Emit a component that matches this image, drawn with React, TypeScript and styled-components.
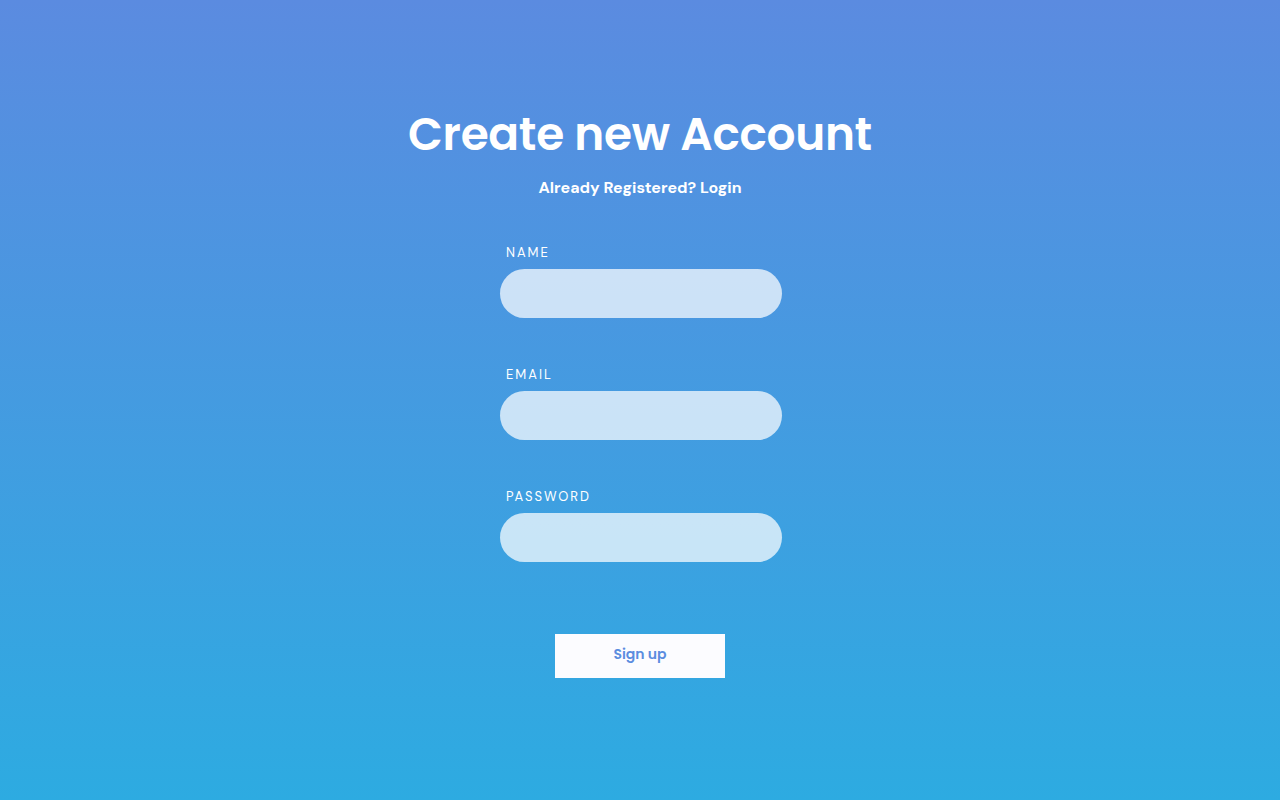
import React from "react";
import styled, { createGlobalStyle } from "styled-components";

const Global = createGlobalStyle`
  html, body { margin: 0; padding: 0; }
  body { font-family: "DM Sans", "Inter", "Liberation Sans", sans-serif; }
`;

const Page = styled.div`
  min-height: 800px;
  background: linear-gradient(180deg, #5b8be0 0%, #2dabe1 100%);
  display: flex;
  flex-direction: column;
  align-items: center;
  padding-top: 104px;
  box-sizing: border-box;
`;

const Title = styled.h1`
  margin: 0;
  font-family: "Poppins", "Inter", sans-serif;
  font-weight: 600;
  font-size: 45.4px;
  line-height: 60px;
  color: #ffffff;
  letter-spacing: -0.3px;
`;

const Sub = styled.p`
  margin: 14px 0 0;
  font-family: "DM Sans", "Inter", sans-serif;
  font-weight: 700;
  font-size: 16px;
  line-height: 20px;
  color: #ffffff;
`;

const Form = styled.form`
  margin-top: 46px;
  display: flex;
  flex-direction: column;
  width: 282px;
  margin-left: 2px;
`;

const Field = styled.div`
  display: flex;
  flex-direction: column;
  margin-bottom: 48px;
`;

const Label = styled.label`
  font-family: "DM Sans", "Inter", sans-serif;
  font-size: 13px;
  line-height: 16px;
  letter-spacing: 2px;
  color: #ffffff;
  padding: 1px 0 0 6px;
  margin-bottom: 8px;
`;

const Input = styled.input`
  height: 49px;
  border: none;
  outline: none;
  border-radius: 25px;
  background: rgba(255, 255, 255, 0.72);
  padding: 0 20px;
  box-sizing: border-box;
  font-size: 15px;
`;

const Button = styled.button`
  align-self: center;
  margin: 24px 0 0 -2px;
  width: 170px;
  height: 44px;
  padding: 0 0 3px;
  border: none;
  background: #fcfcff;
  color: #5b8ddf;
  font-family: "Poppins", "Inter", sans-serif;
  font-weight: 600;
  font-size: 14px;
  cursor: pointer;
`;

export default function App() {
  return (
    <>
      <Global />
      <Page>
        <Title>Create new Account</Title>
        <Sub>Already Registered? Login</Sub>
        <Form onSubmit={(e) => e.preventDefault()}>
          <Field>
            <Label>NAME</Label>
            <Input type="text" />
          </Field>
          <Field>
            <Label>EMAIL</Label>
            <Input type="email" />
          </Field>
          <Field>
            <Label>PASSWORD</Label>
            <Input type="password" />
          </Field>
          <Button type="submit">Sign up</Button>
        </Form>
      </Page>
    </>
  );
}
